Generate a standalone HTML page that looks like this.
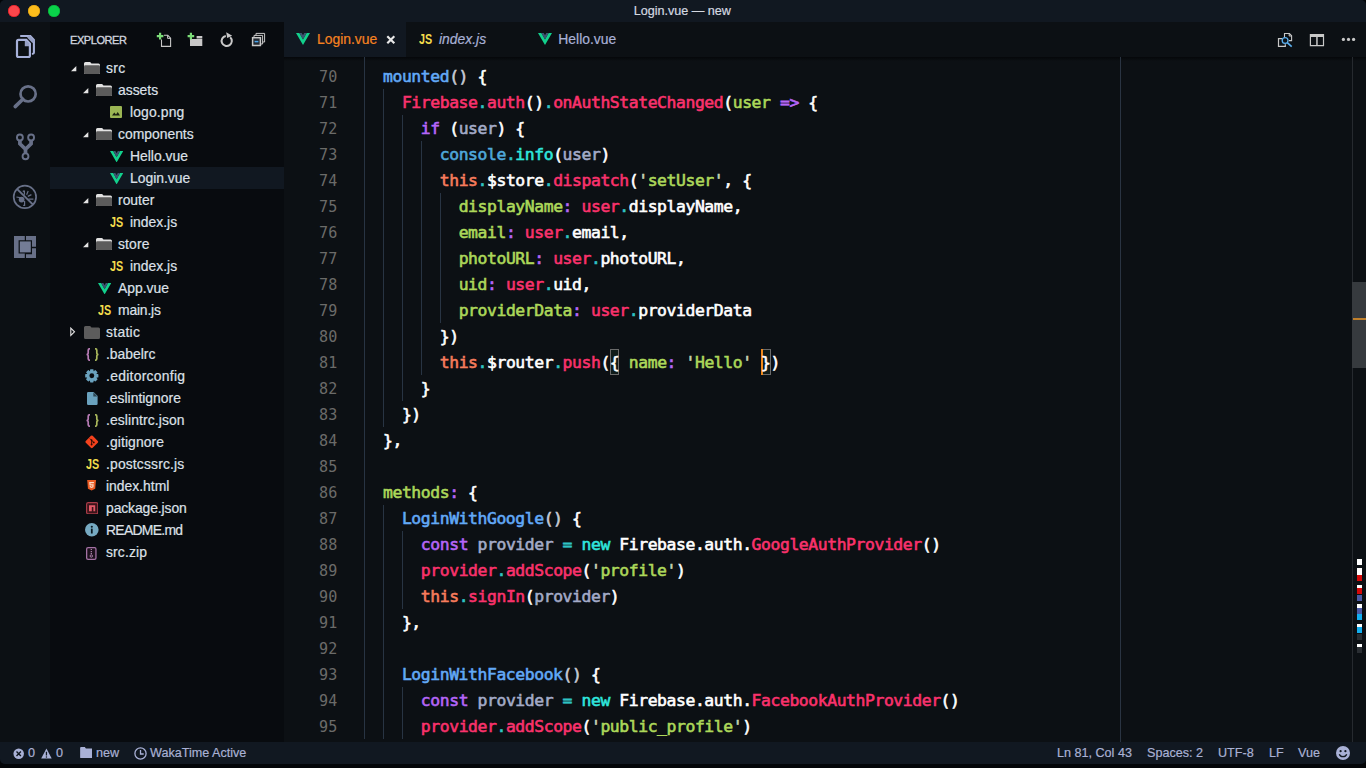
<!DOCTYPE html>
<html lang="en"><head><meta charset="utf-8"><title>Login.vue — new</title>
<style>
*{box-sizing:border-box}
html,body{margin:0;padding:0;width:1366px;height:768px;overflow:hidden;background:#030508}
body{font-family:"Liberation Sans",sans-serif;position:relative;-webkit-font-smoothing:antialiased}
.win{position:absolute;left:0;top:0;width:1366px;height:764px;border-radius:5px;overflow:hidden;background:#0c1014}
.abs{position:absolute}
.title{position:absolute;left:0;top:0;width:1366px;height:22px;background:#111821}
.title .t{position:absolute;left:0;right:1.400px;top:0;line-height:22px;text-align:center;font-size:12.6px;color:#d4d8e0;-webkit-text-stroke:.2px}
.tl{position:absolute;top:5px;width:12px;height:12px;border-radius:50%}
.act{position:absolute;left:0;top:22px;width:50px;height:720px;background:#0c1014}
.side{position:absolute;left:50px;top:22px;width:234px;height:720px;background:#080b0f}
.sh{position:absolute;left:70px;top:22px;height:35px;line-height:36px;font-size:11px;letter-spacing:-.42px;color:#cfd3de;-webkit-text-stroke:.35px}
.row{position:absolute;left:50px;width:234px;height:22px}
.row.sel{background:#111821}
.row>*{position:absolute}
.row .lb{top:0;line-height:22.800px;font-size:13.9px;color:#dde0e8;white-space:pre;margin-left:-50px;-webkit-text-stroke:.2px}
.row .ic,.row .tw,.row .jsic,.row .brc{margin-left:-50px}
.row .ic{top:11px;margin-top:-7px}
.row .tw{top:11px;margin-top:-3px}
.jsic{top:0;line-height:22.600px;font-size:14px;font-weight:bold;color:#f2dc4c;transform:scaleX(.77);transform-origin:0 50%}
.brc{top:0;line-height:21px;font-size:12.5px;white-space:pre}
.brc i{font-style:normal}
.tabs{position:absolute;left:284px;top:22px;width:1082px;height:35px;background:#0c1014}
.tab{position:absolute;top:0;height:35px}
.tab.on{left:0;width:122px;background:#111821}
.tabs .tx{position:absolute;top:0;line-height:35px;font-size:13.9px;white-space:pre;-webkit-text-stroke:.2px}
.ed{position:absolute;left:284px;top:57px;width:1082px;height:685px;background:#0c1014}
.code{font-family:"DejaVu Sans Mono","Liberation Mono",monospace}
.ln{position:absolute;left:284px;width:53.8px;text-align:right;height:26px;line-height:28.4px;font-family:"DejaVu Sans Mono","Liberation Mono",monospace;font-size:15.1px;letter-spacing:.365px;color:#6b6b69}
.cl{position:absolute;height:26px;line-height:28px;white-space:pre;font-family:"DejaVu Sans Mono","Liberation Mono",monospace;font-size:16.4px;letter-spacing:-.4185px;color:#fff;-webkit-text-stroke:.6px}
.ig{position:absolute;width:1px;background:#283443}
.w{color:#fff}.bl{color:#62a9f7}.pk{color:#fa326c}.tl2{color:#2fc3c4}.pu{color:#b566f8}.gn{color:#acd85a}.gy{color:#a3abc8}.or{color:#f87c5c}.cy{color:#2fe6dc}.cn{color:#4fa8dc}.q{color:#c5d4b4}
.status{position:absolute;left:0;top:742px;width:1366px;height:22px;background:#111821;color:#a9b1d4;font-size:12.6px;-webkit-text-stroke:.2px}
.status span{position:absolute;top:0;line-height:22px;white-space:pre}
.pg{color:#c6cad4}

</style></head>
<body>
<div class="win">
<div class="title">
<div class="tl" style="left:8px;background:#fc464b;box-shadow:inset 0 0 0 .6px #e01822"></div>
<div class="tl" style="left:28px;background:#fdbd1c;box-shadow:inset 0 0 0 .6px #e0a010"></div>
<div class="tl" style="left:48px;background:#0ad34a;box-shadow:inset 0 0 0 .6px #08b038"></div>
<div class="t">Login.vue — new</div>
</div>
<div class="act">
<!-- explorer -->
<svg class="abs" style="left:10px;top:8px" width="32" height="32" viewBox="10 30 32 32"><path d="M21 36H30.300L33.900 39.800V52.600Q33.900 53.600 32.800 53.800" fill="none" stroke="#a7b1d9" stroke-width="2.100" stroke-linecap="round"/><path d="M28.200 36.400L33.600 42" stroke="#97a1c6" stroke-width="3.200"/><path d="M18.500 39.900H26.300L29.900 43.700V55.500Q29.900 57 28.400 57H18.500Q17 57 17 55.500V41.400Q17 39.900 18.500 39.900Z" fill="#0c1014" stroke="#a7b1d9" stroke-width="2.200"/><path d="M24.800 41V46.200H29V43.600L26.500 41Z" fill="#97a1c6"/></svg>
<!-- search -->
<svg class="abs" style="left:10px;top:58px" width="32" height="32" viewBox="10 80 32 32"><circle cx="28.100" cy="93.900" r="7.600" fill="none" stroke="#687088" stroke-width="2.700"/><path d="M22.800 99.200L15.200 106.600" stroke="#687088" stroke-width="3.600" stroke-linecap="round"/></svg>
<!-- git -->
<svg class="abs" style="left:8px;top:104px" width="34" height="42" viewBox="8 126 34 42"><path d="M19.900 140V143.700L25.500 149.200V153.500M31.100 140V143.700L25.500 149.200" fill="none" stroke="#687088" stroke-width="3.700" stroke-linejoin="miter"/><g fill="#0c1014" stroke="#687088" stroke-width="1.900"><circle cx="19.900" cy="137.500" r="2.950"/><circle cx="31.100" cy="137.500" r="2.950"/><circle cx="25.500" cy="156.300" r="2.950"/></g></svg>
<!-- debug -->
<svg class="abs" style="left:12px;top:162px" width="26" height="26" viewBox="12 184 26 26"><circle cx="24.900" cy="196.900" r="11.200" fill="none" stroke="#687088" stroke-width="1.700"/><path d="M16.900 188.900L33.300 204.900" stroke="#687088" stroke-width="2"/><circle cx="21.600" cy="199.600" r="2.900" fill="#687088"/><path d="M24.400 190.500v4.300M28.200 191l-1.600 3.800M31.400 194.600l-3.600 1.800M33.400 199.200h-5M24.600 201v4.400h-1.400M16.400 197l3.600.6M22.800 190.800l1.600 1.200" stroke="#687088" stroke-width="1.200" fill="none"/></svg>
<!-- extensions -->
<svg class="abs" style="left:14px;top:214px" width="22" height="22.200" viewBox="0 0 22 22.200"><path d="M0 0H10.800V4.200H4.600V17.400H10.800V22.200H0zM12 0H22V10.800H18V4.200H12zM12 18.300H18V12.200H22V22.200H12z" fill="#687088"/><rect x="5.800" y="5.400" width="11" height="11" fill="#737c96"/></svg>
</div>
<div class="side"></div>
<div class="sh">EXPLORER</div>
<!-- header icons -->
<svg class="abs" style="left:150px;top:26px" width="120" height="28" viewBox="150 26 120 28">
<path d="M161.500 39.500V46.400H170.600V38.200L167.800 35.300H164" fill="none" stroke="#c8c8c8" stroke-width="1.100"/><path d="M167.600 35.300V38.400H170.600" fill="none" stroke="#c8c8c8" stroke-width="1"/>
<path d="M160.100 32.800v6.600M156.800 36.100h6.600" stroke="#7cdc78" stroke-width="2.200"/>
<path d="M190 38.900h12.300v7.100H190zM196.600 36.100h5.700v2.400h-5.700z" fill="#c8c8c8"/>
<path d="M190.900 32.800v6.600M187.600 36.100h6.600" stroke="#7cdc78" stroke-width="2.200"/>
<path d="M230.200 37.200A5.100 5.100 0 1 1 225.800 35.900" fill="none" stroke="#c8c8c8" stroke-width="2"/><path d="M226.200 32.300L232.200 35.700 227.200 38z" fill="#c8c8c8"/>
<path d="M256 35.600V33.400h8.600v8.600h-1.800M254 37.600V35.400h8.600v8.600h-1.800" fill="none" stroke="#c8c8c8" stroke-width="1"/>
<rect x="252.600" y="37.700" width="7.800" height="7.800" fill="#232930" stroke="#c8c8c8" stroke-width="1.500"/>
<path d="M254.600 41.600h3.800" stroke="#4aa6ee" stroke-width="1.500"/>
</svg>
<div class="row" style="top:57px"><svg class="tw" style="left:69.5px" width="7" height="7" viewBox="0 0 7 7"><path d="M6.300 1V6.200H1z" fill="#e4e4e4"/></svg><svg class="ic" style="left:84px;margin-top:-6px" width="16" height="12" viewBox="0 0 16 12"><path d="M1.500 0h4.200q.8 0 1.200.7l.5.8h7.100a1.500 1.500 0 0 1 1.500 1.500V10.500a1.500 1.500 0 0 1-1.500 1.500H1.500A1.500 1.500 0 0 1 0 10.500V1.500A1.500 1.500 0 0 1 1.500 0z" fill="#e2e2e2"/><path d="M0 4.600q0-1.300 1.300-1.300h13.400q1.300 0 1.300 1.300V10.500a1.500 1.500 0 0 1-1.500 1.500H1.500A1.500 1.500 0 0 1 0 10.500z" fill="#5c5c5c"/></svg><span class="lb" style="left:106px;letter-spacing:0.4px">src</span></div>
<div class="row" style="top:79px"><svg class="tw" style="left:81.5px" width="7" height="7" viewBox="0 0 7 7"><path d="M6.300 1V6.200H1z" fill="#e4e4e4"/></svg><svg class="ic" style="left:96px;margin-top:-6px" width="16" height="12" viewBox="0 0 16 12"><path d="M1.500 0h4.200q.8 0 1.200.7l.5.8h7.100a1.500 1.500 0 0 1 1.500 1.500V10.500a1.500 1.500 0 0 1-1.500 1.500H1.500A1.500 1.500 0 0 1 0 10.500V1.500A1.500 1.500 0 0 1 1.500 0z" fill="#e2e2e2"/><path d="M0 4.600q0-1.300 1.300-1.300h13.400q1.300 0 1.300 1.300V10.500a1.500 1.500 0 0 1-1.500 1.500H1.500A1.500 1.500 0 0 1 0 10.500z" fill="#5c5c5c"/></svg><span class="lb" style="left:118px">assets</span></div>
<div class="row" style="top:101px"><svg class="ic" style="left:110px;margin-top:-6px" width="12" height="12" viewBox="0 0 12 12"><rect width="12" height="12" rx="1" fill="#9bb654"/><path d="M2 9.500l2.300-3 1.700 2 1.700-2.500L10 9.500z" fill="#1a2010"/></svg><span class="lb" style="left:130px;letter-spacing:0.14px">logo.png</span></div>
<div class="row" style="top:123px"><svg class="tw" style="left:81.5px" width="7" height="7" viewBox="0 0 7 7"><path d="M6.300 1V6.200H1z" fill="#e4e4e4"/></svg><svg class="ic" style="left:96px;margin-top:-6px" width="16" height="12" viewBox="0 0 16 12"><path d="M1.500 0h4.200q.8 0 1.200.7l.5.8h7.100a1.500 1.500 0 0 1 1.500 1.500V10.500a1.500 1.500 0 0 1-1.500 1.500H1.500A1.500 1.500 0 0 1 0 10.500V1.500A1.500 1.500 0 0 1 1.500 0z" fill="#e2e2e2"/><path d="M0 4.600q0-1.300 1.300-1.300h13.400q1.300 0 1.300 1.300V10.500a1.500 1.500 0 0 1-1.500 1.500H1.500A1.500 1.500 0 0 1 0 10.500z" fill="#5c5c5c"/></svg><span class="lb" style="left:118px">components</span></div>
<div class="row" style="top:145px"><svg class="ic" style="left:110px;margin-top:-5.500px" width="13.200" height="11.500" viewBox="0 0 14 12"><path d="M0 0H3.400L7 6.400 10.600 0H14L7 12z" fill="#12d08c"/><path d="M3.400 0H5.700L7 2.300 8.300 0H10.600L7 6.400z" fill="#3a5672"/></svg><span class="lb" style="left:130px">Hello.vue</span></div>
<div class="row sel" style="top:167px"><svg class="ic" style="left:110px;margin-top:-5.500px" width="13.200" height="11.500" viewBox="0 0 14 12"><path d="M0 0H3.400L7 6.400 10.600 0H14L7 12z" fill="#12d08c"/><path d="M3.400 0H5.700L7 2.300 8.300 0H10.600L7 6.400z" fill="#3a5672"/></svg><span class="lb" style="left:130px">Login.vue</span></div>
<div class="row" style="top:189px"><svg class="tw" style="left:81.5px" width="7" height="7" viewBox="0 0 7 7"><path d="M6.300 1V6.200H1z" fill="#e4e4e4"/></svg><svg class="ic" style="left:96px;margin-top:-6px" width="16" height="12" viewBox="0 0 16 12"><path d="M1.500 0h4.200q.8 0 1.200.7l.5.8h7.100a1.500 1.500 0 0 1 1.500 1.500V10.500a1.500 1.500 0 0 1-1.500 1.500H1.500A1.500 1.500 0 0 1 0 10.500V1.500A1.500 1.500 0 0 1 1.500 0z" fill="#e2e2e2"/><path d="M0 4.600q0-1.300 1.300-1.300h13.400q1.300 0 1.300 1.300V10.500a1.500 1.500 0 0 1-1.500 1.500H1.500A1.500 1.500 0 0 1 0 10.500z" fill="#5c5c5c"/></svg><span class="lb" style="left:118px">router</span></div>
<div class="row" style="top:211px"><span class="jsic" style="left:110px">JS</span><span class="lb" style="left:130px">index.js</span></div>
<div class="row" style="top:233px"><svg class="tw" style="left:81.5px" width="7" height="7" viewBox="0 0 7 7"><path d="M6.300 1V6.200H1z" fill="#e4e4e4"/></svg><svg class="ic" style="left:96px;margin-top:-6px" width="16" height="12" viewBox="0 0 16 12"><path d="M1.500 0h4.200q.8 0 1.200.7l.5.8h7.100a1.500 1.500 0 0 1 1.500 1.500V10.500a1.500 1.500 0 0 1-1.500 1.500H1.500A1.500 1.500 0 0 1 0 10.500V1.500A1.500 1.500 0 0 1 1.500 0z" fill="#e2e2e2"/><path d="M0 4.600q0-1.300 1.300-1.300h13.400q1.300 0 1.300 1.300V10.500a1.500 1.500 0 0 1-1.500 1.500H1.500A1.500 1.500 0 0 1 0 10.500z" fill="#5c5c5c"/></svg><span class="lb" style="left:118px;letter-spacing:0.15px">store</span></div>
<div class="row" style="top:255px"><span class="jsic" style="left:110px">JS</span><span class="lb" style="left:130px">index.js</span></div>
<div class="row" style="top:277px"><svg class="ic" style="left:98px;margin-top:-5.500px" width="13.200" height="11.500" viewBox="0 0 14 12"><path d="M0 0H3.400L7 6.400 10.600 0H14L7 12z" fill="#12d08c"/><path d="M3.400 0H5.700L7 2.300 8.300 0H10.600L7 6.400z" fill="#3a5672"/></svg><span class="lb" style="left:118px">App.vue</span></div>
<div class="row" style="top:299px"><span class="jsic" style="left:98px">JS</span><span class="lb" style="left:118px;letter-spacing:-0.17px">main.js</span></div>
<div class="row" style="top:321px"><svg class="tw" style="left:70.3px;margin-top:-4.800px" width="5.500" height="9.600" viewBox="0 0 5.500 9.600"><path d="M.8 1.100L4.500 4.800 .8 8.500z" fill="none" stroke="#e4e4e4" stroke-width="1.100"/></svg><svg class="ic" style="left:84px;margin-top:-6px" width="16" height="13" viewBox="0 0 16 13"><path d="M1.500 0h4.200q.8 0 1.200.7l.5.8h7.100a1.500 1.500 0 0 1 1.500 1.500V11.500a1.500 1.500 0 0 1-1.500 1.500H1.500A1.500 1.500 0 0 1 0 11.500V1.500A1.500 1.500 0 0 1 1.500 0z" fill="#5c5c5c"/></svg><span class="lb" style="left:106px;letter-spacing:0.3px">static</span></div>
<div class="row" style="top:343px"><svg class="ic" style="left:86px;margin-top:-6.500px" width="13" height="13" viewBox="0 0 13 13"><path d="M4 .7C2.600 .7 2.200 1.200 2.200 2.400V4.800C2.200 5.900 1.600 6.500 .5 6.500 1.600 6.500 2.200 7.100 2.200 8.200V10.600C2.200 11.800 2.600 12.300 4 12.300" fill="none" stroke="#b87cb6" stroke-width="1.700"/><path d="M9 .7C10.400 .7 10.800 1.200 10.800 2.400V4.800C10.800 5.900 11.400 6.500 12.500 6.500 11.400 6.500 10.800 7.100 10.800 8.200V10.600C10.800 11.800 10.400 12.300 9 12.300" fill="none" stroke="#a9b85c" stroke-width="1.700"/></svg><span class="lb" style="left:106px">.babelrc</span></div>
<div class="row" style="top:365px"><svg class="ic" style="left:86px;margin-top:-7px;margin-left:-50.600px" width="13.600" height="13.600" viewBox="0 0 14 14"><g fill="#6aa2be"><circle cx="7" cy="7" r="5.300"/><rect x="5.200" y=".2" width="3.600" height="13.600" rx=".6"/><rect x="5.200" y=".2" width="3.600" height="13.600" rx=".6" transform="rotate(45 7 7)"/><rect x="5.200" y=".2" width="3.600" height="13.600" rx=".6" transform="rotate(90 7 7)"/><rect x="5.200" y=".2" width="3.600" height="13.600" rx=".6" transform="rotate(135 7 7)"/></g><circle cx="7" cy="7" r="2.500" fill="#080b0f"/></svg><span class="lb" style="left:106px;letter-spacing:0.28px">.editorconfig</span></div>
<div class="row" style="top:387px"><svg class="ic" style="left:86px;margin-top:-6.300px;margin-left:-49px" width="10.600" height="13" viewBox="0 0 10.600 13"><path d="M1.200 0h5.400l4 4v7.800a1.200 1.200 0 0 1-1.200 1.200H1.200A1.200 1.200 0 0 1 0 11.800V1.200A1.200 1.200 0 0 1 1.200 0z" fill="#6aa2be"/><path d="M6.300 .3v4.100h4.100z" fill="#080b0f" opacity=".6"/></svg><span class="lb" style="left:106px">.eslintignore</span></div>
<div class="row" style="top:409px"><svg class="ic" style="left:86px;margin-top:-6.500px" width="13" height="13" viewBox="0 0 13 13"><path d="M4 .7C2.600 .7 2.200 1.200 2.200 2.400V4.800C2.200 5.900 1.600 6.500 .5 6.500 1.600 6.500 2.200 7.100 2.200 8.200V10.600C2.200 11.800 2.600 12.300 4 12.300" fill="none" stroke="#b87cb6" stroke-width="1.700"/><path d="M9 .7C10.400 .7 10.800 1.200 10.800 2.400V4.800C10.800 5.900 11.400 6.500 12.500 6.500 11.400 6.500 10.800 7.100 10.800 8.200V10.600C10.800 11.800 10.400 12.300 9 12.300" fill="none" stroke="#a9b85c" stroke-width="1.700"/></svg><span class="lb" style="left:106px;letter-spacing:0.1px">.eslintrc.json</span></div>
<div class="row" style="top:431px"><svg class="ic" style="left:86px;margin-top:-6.800px;margin-left:-50.600px" width="13.600" height="13.600" viewBox="0 0 14 14"><rect x="2" y="2" width="10" height="10" rx="1.300" transform="rotate(45 7 7)" fill="#f4421d"/><path d="M5 3.700L8.700 7.400M6.800 5.500v4" stroke="#2a0a04" stroke-width=".9" fill="none"/><circle cx="6.800" cy="9.800" r="1" fill="#2a0a04"/><circle cx="9" cy="7.600" r="1" fill="#2a0a04"/><circle cx="6.800" cy="5.400" r=".9" fill="#2a0a04"/></svg><span class="lb" style="left:106px;letter-spacing:0.1px">.gitignore</span></div>
<div class="row" style="top:453px"><span class="jsic" style="left:86px">JS</span><span class="lb" style="left:106px;letter-spacing:0.15px">.postcssrc.js</span></div>
<div class="row" style="top:475px"><svg class="ic" style="left:86px;margin-top:-6px;margin-left:-48.600px" width="9.200" height="10.600" viewBox="0 0 10 12"><path d="M0 0h10l-.9 10L5 12 .9 10z" fill="#ea5a22"/><path d="M2.300 2.300h5.400l-.12 1.400H3.800l.1 1.200h3.500l-.32 3.400L5 9l-2.100-.7-.1-1.400h1.300l.06.5.84.25.84-.25.1-1.100H2.600z" fill="#fbd9c4"/></svg><span class="lb" style="left:106px">index.html</span></div>
<div class="row" style="top:497px"><svg class="ic" style="left:86px;margin-top:-6px" width="12.400" height="12.400" viewBox="0 0 12.400 12.400"><rect x=".6" y=".6" width="11.200" height="11.200" rx="1.600" fill="#3c141a" stroke="#a83c48" stroke-width="1.200"/><path d="M3 3.200h6.200v6H7.400V5H5.800v4.200H3z" fill="#e25a68"/></svg><span class="lb" style="left:106px;letter-spacing:-0.1px">package.json</span></div>
<div class="row" style="top:519px"><svg class="ic" style="left:86px;margin-top:-6.800px;margin-left:-51px" width="13.600" height="13.600" viewBox="0 0 14 14"><circle cx="7" cy="7" r="7" fill="#76aac2"/><rect x="6.100" y="5.800" width="1.800" height="5" fill="#0a1820"/><circle cx="7" cy="3.900" r="1.100" fill="#0a1820"/></svg><span class="lb" style="left:106px;letter-spacing:-0.7px">README.md</span></div>
<div class="row" style="top:541px"><svg class="ic" style="left:86px;margin-top:-5.500px;margin-left:-49.600px" width="10.600" height="13" viewBox="0 0 10.600 13"><rect x=".65" y=".65" width="9.300" height="11.700" rx="1.400" fill="#1c101c" stroke="#a372a4" stroke-width="1.300"/><path d="M5.300 2v5" stroke="#b48ab4" stroke-width="1.200" stroke-dasharray="1.100 .8"/><circle cx="5.300" cy="9" r="1.200" fill="none" stroke="#b48ab4" stroke-width=".9"/></svg><span class="lb" style="left:106px;letter-spacing:0.14px">src.zip</span></div>
<div class="tabs">
<div class="tab on"></div>
<svg class="abs" style="left:12px;top:11px" width="14" height="12" viewBox="0 0 14 12"><path d="M0 0H3.400L7 6.400 10.600 0H14L7 12z" fill="#12d08c"/><path d="M3.400 0H5.700L7 2.300 8.300 0H10.600L7 6.400z" fill="#3a5672"/></svg>
<span class="tx" style="left:33px;color:#f58220">Login.vue</span>
<svg class="abs" style="left:102px;top:13px" width="10" height="10" viewBox="0 0 10 10"><path d="M1.300 1.300l7 7M8.300 1.300l-7 7" stroke="#e8e8e8" stroke-width="2.200"/></svg>
<span class="tx" style="left:135px;line-height:34.400px;font-size:14px;font-weight:bold;color:#f2dc4c;transform:scaleX(.77);transform-origin:0 50%;-webkit-text-stroke:0">JS</span>
<span class="tx" style="left:155px;color:#a9b1d6;font-style:italic">index.js</span>
<svg class="abs" style="left:254px;top:11px" width="14" height="12" viewBox="0 0 14 12"><path d="M0 0H3.400L7 6.400 10.600 0H14L7 12z" fill="#12d08c"/><path d="M3.400 0H5.700L7 2.300 8.300 0H10.600L7 6.400z" fill="#3a5672"/></svg>
<span class="tx" style="left:274.300px;color:#a9b1d6">Hello.vue</span>
<!-- right actions -->
<svg class="abs" style="left:986px;top:4px" width="96" height="28" viewBox="1270 26 96 28">
<path d="M1284.500 37.500V33.500H1289.400L1291.600 35.700V40.600H1289" fill="none" stroke="#c8c8c8" stroke-width="1.100"/><path d="M1289.200 33.500V36H1291.600" fill="none" stroke="#c8c8c8" stroke-width="1"/>
<path d="M1282.300 38.600H1278.500V46.400H1285.300V44.200" fill="none" stroke="#c8c8c8" stroke-width="1.200"/>
<circle cx="1285.100" cy="40.500" r="2.900" fill="none" stroke="#5aaeee" stroke-width="1.300"/><path d="M1287.200 42.600L1291.700 46.600" stroke="#5aaeee" stroke-width="1.700"/>
<path d="M1309.800 33.900h14.300v12.300h-14.300zM1311 37h5.200v8.100h-5.200zM1317.700 37h5.200v8.100h-5.200z" fill="#c8c8c8" fill-rule="evenodd"/>
<circle cx="1343.400" cy="39.400" r="1.600" fill="#c8c8c8"/><circle cx="1348.500" cy="39.400" r="1.600" fill="#c8c8c8"/><circle cx="1353.600" cy="39.400" r="1.600" fill="#c8c8c8"/>
</svg>
</div>
<div class="ed"></div>
<div class="abs" style="left:284px;top:57px;width:1082px;height:4px;background:linear-gradient(#05070a,rgba(5,7,10,0))"></div>
<div class="ig" style="left:364.1px;top:57px;height:682px"></div>
<div class="ig" style="left:383.0px;top:89px;height:338px"></div>
<div class="ig" style="left:401.9px;top:115px;height:286px"></div>
<div class="ig" style="left:420.8px;top:141px;height:234px"></div>
<div class="ig" style="left:439.7px;top:193px;height:130px"></div>
<div class="ig" style="left:383.0px;top:505px;height:234px"></div>
<div class="ig" style="left:401.9px;top:531px;height:78px"></div>
<div class="ig" style="left:401.9px;top:687px;height:52px"></div>
<div class="abs" style="left:1120px;top:57px;width:1px;height:685px;background:#2a3442"></div>
<!-- bracket match -->
<div class="abs" style="left:609.600px;top:349px;width:9.600px;height:26px;background:#101c1a;border:1px solid #6a6a6a"></div>
<div class="abs" style="left:761px;top:349px;width:9.600px;height:26px;background:#101c1a;border:1px solid #6a6a6a"></div>
<div class="abs" style="left:761px;top:349px;width:2px;height:26px;background:#f08a1c"></div>
<div class="ln" style="top:63px">70</div>
<div class="cl" style="top:63px;left:383.01px"><span class="bl">mounted</span><span class="pg">()</span><span class="w"> {</span></div>
<div class="ln" style="top:89px">71</div>
<div class="cl" style="top:89px;left:401.92px"><span class="pk">Firebase</span><span class="tl2">.</span><span class="pk">auth</span><span class="w">()</span><span class="tl2">.</span><span class="pk">onAuthStateChanged</span><span class="w">(</span><span class="gn">user</span><span class="w"> </span><span class="pu">=&gt;</span><span class="w"> {</span></div>
<div class="ln" style="top:115px">72</div>
<div class="cl" style="top:115px;left:420.83px"><span class="pu">if</span><span class="w"> (</span><span class="gy">user</span><span class="w">) {</span></div>
<div class="ln" style="top:141px">73</div>
<div class="cl" style="top:141px;left:439.74px"><span class="cn">console</span><span class="tl2">.</span><span class="cy">info</span><span class="w">(</span><span class="gy">user</span><span class="w">)</span></div>
<div class="ln" style="top:167px">74</div>
<div class="cl" style="top:167px;left:439.74px"><span class="or">this</span><span class="tl2">.</span><span class="w">$store</span><span class="tl2">.</span><span class="pk">dispatch</span><span class="w">(</span><span class="q">'</span><span class="gn">setUser</span><span class="q">'</span><span class="w">, {</span></div>
<div class="ln" style="top:193px">75</div>
<div class="cl" style="top:193px;left:458.65px"><span class="gn">displayName</span><span class="pu">:</span><span class="w"> </span><span class="pk">user</span><span class="tl2">.</span><span class="w">displayName,</span></div>
<div class="ln" style="top:219px">76</div>
<div class="cl" style="top:219px;left:458.65px"><span class="gn">email</span><span class="pu">:</span><span class="w"> </span><span class="pk">user</span><span class="tl2">.</span><span class="w">email,</span></div>
<div class="ln" style="top:245px">77</div>
<div class="cl" style="top:245px;left:458.65px"><span class="gn">photoURL</span><span class="pu">:</span><span class="w"> </span><span class="pk">user</span><span class="tl2">.</span><span class="w">photoURL,</span></div>
<div class="ln" style="top:271px">78</div>
<div class="cl" style="top:271px;left:458.65px"><span class="gn">uid</span><span class="pu">:</span><span class="w"> </span><span class="pk">user</span><span class="tl2">.</span><span class="w">uid,</span></div>
<div class="ln" style="top:297px">79</div>
<div class="cl" style="top:297px;left:458.65px"><span class="gn">providerData</span><span class="pu">:</span><span class="w"> </span><span class="pk">user</span><span class="tl2">.</span><span class="w">providerData</span></div>
<div class="ln" style="top:323px">80</div>
<div class="cl" style="top:323px;left:439.74px"><span class="w">})</span></div>
<div class="ln" style="top:349px">81</div>
<div class="cl" style="top:349px;left:439.74px"><span class="or">this</span><span class="tl2">.</span><span class="w">$router</span><span class="tl2">.</span><span class="pk">push</span><span class="w">({ </span><span class="gn">name</span><span class="pu">:</span><span class="w"> </span><span class="q">'</span><span class="gn">Hello</span><span class="q">'</span><span class="w"> })</span></div>
<div class="ln" style="top:375px">82</div>
<div class="cl" style="top:375px;left:420.83px"><span class="w">}</span></div>
<div class="ln" style="top:401px">83</div>
<div class="cl" style="top:401px;left:401.92px"><span class="w">})</span></div>
<div class="ln" style="top:427px">84</div>
<div class="cl" style="top:427px;left:383.01px"><span class="w">},</span></div>
<div class="ln" style="top:453px">85</div>
<div class="ln" style="top:479px">86</div>
<div class="cl" style="top:479px;left:383.01px"><span class="gn">methods</span><span class="pu">:</span><span class="w"> {</span></div>
<div class="ln" style="top:505px">87</div>
<div class="cl" style="top:505px;left:401.92px"><span class="bl">LoginWithGoogle</span><span class="pg">()</span><span class="w"> {</span></div>
<div class="ln" style="top:531px">88</div>
<div class="cl" style="top:531px;left:420.83px"><span class="pu">const</span><span class="w"> </span><span class="gy">provider</span><span class="w"> </span><span class="tl2">=</span><span class="w"> </span><span class="cy">new</span><span class="w"> Firebase.auth.</span><span class="pk">GoogleAuthProvider</span><span class="w">()</span></div>
<div class="ln" style="top:557px">89</div>
<div class="cl" style="top:557px;left:420.83px"><span class="pk">provider</span><span class="tl2">.</span><span class="pk">addScope</span><span class="w">(</span><span class="q">'</span><span class="gn">profile</span><span class="q">'</span><span class="w">)</span></div>
<div class="ln" style="top:583px">90</div>
<div class="cl" style="top:583px;left:420.83px"><span class="or">this</span><span class="tl2">.</span><span class="pk">signIn</span><span class="w">(</span><span class="gy">provider</span><span class="w">)</span></div>
<div class="ln" style="top:609px">91</div>
<div class="cl" style="top:609px;left:401.92px"><span class="w">},</span></div>
<div class="ln" style="top:635px">92</div>
<div class="ln" style="top:661px">93</div>
<div class="cl" style="top:661px;left:401.92px"><span class="bl">LoginWithFacebook</span><span class="pg">()</span><span class="w"> {</span></div>
<div class="ln" style="top:687px">94</div>
<div class="cl" style="top:687px;left:420.83px"><span class="pu">const</span><span class="w"> </span><span class="gy">provider</span><span class="w"> </span><span class="tl2">=</span><span class="w"> </span><span class="cy">new</span><span class="w"> Firebase.auth.</span><span class="pk">FacebookAuthProvider</span><span class="w">()</span></div>
<div class="ln" style="top:713px">95</div>
<div class="cl" style="top:713px;left:420.83px"><span class="pk">provider</span><span class="tl2">.</span><span class="pk">addScope</span><span class="w">(</span><span class="q">'</span><span class="gn">public_profile</span><span class="q">'</span><span class="w">)</span></div>
<!-- scrollbar -->
<div class="abs" style="left:1352px;top:57px;width:1px;height:685px;background:#262a2f"></div>
<div class="abs" style="left:1352px;top:282px;width:14px;height:86px;background:#363a3e"></div>
<div class="abs" style="left:1353px;top:318px;width:13px;height:2px;background:#c0802c"></div>
<div class="abs" style="left:1357px;top:559px;width:5px;height:6px;background:#fff"></div>
<div class="abs" style="left:1357px;top:568px;width:5px;height:7px;background:#fff"></div>
<div class="abs" style="left:1357px;top:575px;width:5px;height:6px;background:#d40808"></div>
<div class="abs" style="left:1357px;top:585px;width:5px;height:3px;background:#fff"></div>
<div class="abs" style="left:1357px;top:588px;width:5px;height:6px;background:#d40808"></div>
<div class="abs" style="left:1357px;top:595px;width:5px;height:6px;background:#4a5aa4"></div>
<div class="abs" style="left:1357px;top:604px;width:5px;height:4px;background:#fff"></div>
<div class="abs" style="left:1357px;top:608px;width:5px;height:6px;background:#4a5aa4"></div>
<div class="abs" style="left:1357px;top:614px;width:5px;height:6px;background:#12aef0"></div>
<div class="abs" style="left:1357px;top:624px;width:5px;height:3px;background:#fff"></div>
<div class="abs" style="left:1357px;top:627px;width:5px;height:6px;background:#12aef0"></div>
<div class="abs" style="left:1357px;top:634px;width:5px;height:6px;background:#2a2e33"></div>
<div class="abs" style="left:1357px;top:644px;width:5px;height:3px;background:#fff"></div>
<div class="abs" style="left:1357px;top:647px;width:5px;height:6px;background:#2a2e33"></div>
<div class="status">
<svg class="abs" style="left:12.800px;top:5.800px" width="11.400" height="11.400" viewBox="0 0 13 13"><circle cx="6.500" cy="6.500" r="6" fill="#a9b1d6"/><path d="M4 4l5 5M9 4l-5 5" stroke="#111821" stroke-width="1.600"/></svg>
<span style="left:28px">0</span>
<svg class="abs" style="left:41px;top:5.800px" width="10.900" height="11" viewBox="0 0 13 13"><path d="M6.500 0.500L12.800 12.500H0.200z" fill="#a9b1d6"/><path d="M6.500 4.500v4.500" stroke="#111821" stroke-width="1.500"/><circle cx="6.500" cy="10.700" r=".9" fill="#111821"/></svg>
<span style="left:56px">0</span>
<svg class="abs" style="left:80px;top:5px" width="12.400" height="11.200" viewBox="0 0 13 12"><path d="M1 0h4l1.200 1.500H12a1 1 0 0 1 1 1V11a1 1 0 0 1-1 1H1a1 1 0 0 1-1-1V1a1 1 0 0 1 1-1z" fill="#a9b1d6"/></svg>
<span style="left:96px">new</span>
<svg class="abs" style="left:134px;top:5px" width="13" height="13" viewBox="0 0 13 13"><circle cx="6.500" cy="6.500" r="5.600" fill="none" stroke="#a9b1d6" stroke-width="1.300"/><path d="M6.500 3v4h3.200" fill="none" stroke="#a9b1d6" stroke-width="1.300"/></svg>
<span style="left:150px">WakaTime Active</span>
<span style="left:1057px">Ln 81, Col 43</span>
<span style="left:1147px">Spaces: 2</span>
<span style="left:1218px">UTF-8</span>
<span style="left:1269px">LF</span>
<span style="left:1298px">Vue</span>
<svg class="abs" style="left:1336px;top:4px" width="14" height="14" viewBox="0 0 14 14"><circle cx="7" cy="7" r="7" fill="#a9b1d6"/><circle cx="4.600" cy="5.200" r="1.100" fill="#111821"/><circle cx="9.400" cy="5.200" r="1.100" fill="#111821"/><path d="M3.300 8.200a4 4 0 0 0 7.400 0" fill="none" stroke="#111821" stroke-width="1.300"/></svg>
</div>
</div>

</body></html>
